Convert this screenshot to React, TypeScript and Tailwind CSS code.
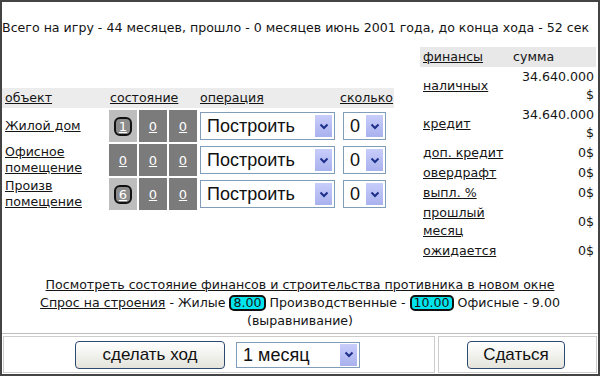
import React from 'react';

function Arrow() {
  return (
    <div className="w-[17px] h-[22px] bg-gradient-to-b from-[#c8cdfa] to-[#a9b1ee] flex items-center justify-center">
      <svg width="10" height="7" viewBox="0 0 10 7">
        <polyline points="1.5,1.5 5,5 8.5,1.5" fill="none" stroke="#1d2f8a" strokeWidth="2" />
      </svg>
    </div>
  );
}

function FakeSelect({ value, width, height = 28 }: { value: string; width: number; height?: number }) {
  return (
    <div
      className="border border-[#7f9db9] bg-white flex items-center justify-between pl-[6px] pr-[2px] text-[18px] leading-none text-[#111] font-['Liberation_Sans',Arial,sans-serif]"
      style={{ width, height }}
    >
      <span>{value}</span>
      <Arrow />
    </div>
  );
}

function Cell({ v, light, ring }: { v: string; light?: boolean; ring?: boolean }) {
  return (
    <div className={`w-[28px] h-[32px] flex items-center justify-center ${light ? 'bg-[#bdbdbd]' : 'bg-[#7b7b7b]'}`}>
      {ring ? (
        <div className="w-[18px] h-[19px] rounded-[6px] border-[2.5px] border-[#111] bg-[#8c8c8c] flex items-center justify-center text-white underline text-[13px] leading-none">
          {v}
        </div>
      ) : (
        <span className="text-white underline text-[13px] leading-none">{v}</span>
      )}
    </div>
  );
}

const buildings = [
  { name: ['Жилой дом'], first: '1', ring: true },
  { name: ['Офисное', 'помещение'], first: '0', ring: false },
  { name: ['Произв', 'помещение'], first: '6', ring: true },
];

const finances = [
  { label: ['наличных'], value: ['34.640.000', '$'] },
  { label: ['кредит'], value: ['34.640.000', '$'] },
  { label: ['доп. кредит'], value: ['0$'] },
  { label: ['овердрафт'], value: ['0$'] },
  { label: ['выпл. %'], value: ['0$'] },
  { label: ['прошлый', 'месяц'], value: ['0$'] },
  { label: ['ожидается'], value: ['0$'] },
];

function Badge({ children }: { children: React.ReactNode }) {
  return (
    <span className="inline-block bg-[#00e4ee] border-2 border-[#111] rounded-[5px] px-[2px] leading-[12px]">
      {children}
    </span>
  );
}

export default function App() {
  return (
    <div className="w-[600px] h-[376px] border-2 border-[#444] bg-white text-[#151515] overflow-hidden flex flex-col font-['DejaVu_Sans',Verdana,sans-serif] text-[12.6px]">
      <div className="pt-[18px] leading-[16px] whitespace-nowrap">
        Всего на игру - 44 месяцев, прошло - 0 месяцев июнь 2001 года, до конца хода - 52 сек
      </div>

      <div className="flex mt-[11px]">
        {/* buildings */}
        <div className="w-[392px] pt-[41px] flex flex-col gap-[2px]">
          <div className="h-[20px] bg-[#ececec] flex items-center">
            <span className="w-[107px] pl-[3px] underline">объект</span>
            <span className="w-[91px] pl-[1px] underline">состояние</span>
            <span className="w-[140px] underline">операция</span>
            <span className="underline">сколько</span>
          </div>
          {buildings.map((b, i) => (
            <div key={i} className="h-[32px] flex items-center">
              <div className="w-[107px] pl-[3px] leading-[16px] underline">
                {b.name.map((n) => (
                  <div key={n}>{n}</div>
                ))}
              </div>
              <div className="flex gap-[2px]">
                <Cell v={b.first} light={b.ring} ring={b.ring} />
                <Cell v="0" />
                <Cell v="0" />
              </div>
              <div className="ml-[3px]">
                <FakeSelect value="Построить" width={135} />
              </div>
              <div className="ml-[8px]">
                <FakeSelect value="0" width={43} />
              </div>
            </div>
          ))}
        </div>

        {/* finances */}
        <div className="ml-[26px] w-[176px] flex flex-col">
          <div className="h-[20px] bg-[#e8e8e8] flex items-center">
            <span className="w-[90px] pl-[3px] underline">финансы</span>
            <span className="pl-[3px]">сумма</span>
          </div>
          {finances.map((f, i) => (
            <div key={i} className="flex items-center py-[1px] leading-[18px]">
              <div className="w-[90px] pl-[3px] underline whitespace-nowrap">
                {f.label.map((l) => (
                  <div key={l}>{l}</div>
                ))}
              </div>
              <div className="flex-1 pr-[2px] text-right">
                {f.value.map((v) => (
                  <div key={v}>{v}</div>
                ))}
              </div>
            </div>
          ))}
        </div>
      </div>

      <div className="mt-[15px] text-center leading-[18px]">
        <div className="underline">Посмотреть состояние финансов и строительства противника в новом окне</div>
        <div>
          <span className="underline">Спрос на строения</span> - Жилые <Badge>8.00</Badge> Производственные - <Badge>10.00</Badge> Офисные - 9.00
        </div>
        <div>(выравнивание)</div>
      </div>

      <div className="mt-[3px] h-[41px] border-t border-[#bdbdbd] pt-[2px] px-[1px] flex gap-[3px] font-['Liberation_Sans',Arial,sans-serif]">
        <div className="w-[432px] h-[37px] border border-[#cdcdcd] flex items-center">
          <button className="ml-[71px] w-[150px] h-[28px] rounded-[4px] border border-[#2b4a6e] bg-gradient-to-b from-white to-[#e4e4dc] text-[17px] text-[#111]">
            сделать ход
          </button>
          <div className="ml-[11px]">
            <FakeSelect value="1 месяц" width={124} height={26} />
          </div>
        </div>
        <div className="flex-1 h-[37px] border border-[#cdcdcd] flex items-center">
          <button className="ml-[28px] w-[98px] h-[28px] rounded-[4px] border border-[#2b4a6e] bg-gradient-to-b from-white to-[#e4e4dc] text-[17px] text-[#111]">
            Сдаться
          </button>
        </div>
      </div>
    </div>
  );
}
